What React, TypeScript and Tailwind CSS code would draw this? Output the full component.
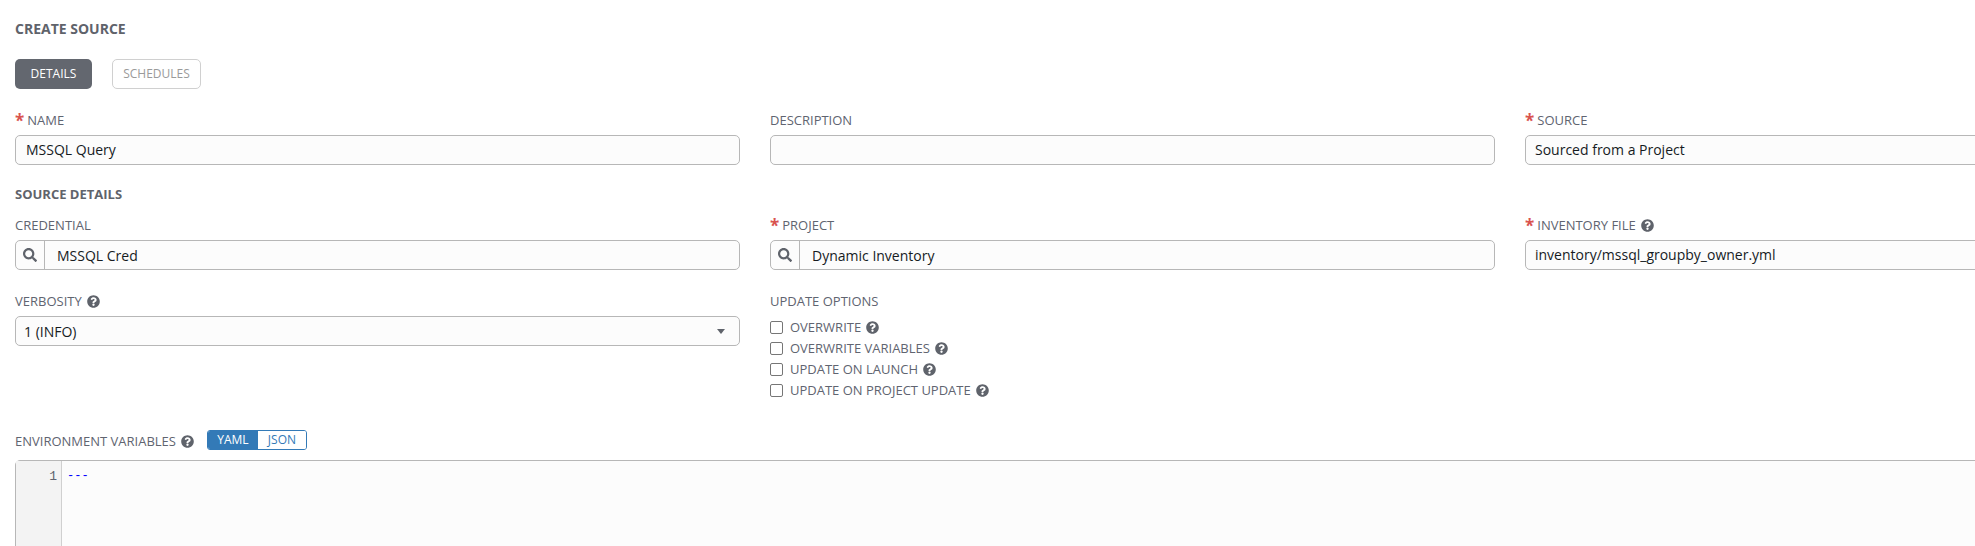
import React from "react";

const Help = () => (
  <svg viewBox="0 0 512 512" className="w-[13px] h-[13px] shrink-0 fill-[#5f636b]">
    <path d="M504 256c0 137-111 248-248 248S8 393 8 256 119 8 256 8s248 111 248 248zM262.700 90c-54.500 0-89.300 23-116.500 63.800-3.500 5.300-2.400 12.400 2.700 16.300l34.700 26.300c5.200 3.900 12.600 3 16.700-2.100 17.900-22.700 30.100-35.800 57.300-35.800 20.400 0 45.700 13.100 45.700 32.900 0 15-12.400 22.700-32.500 34-23.500 13.200-54.600 29.600-54.600 70.600V300c0 6.600 5.400 12 12 12h56c6.600 0 12-5.400 12-12v-1.300c0-28.400 83-29.600 83-106.700 0-58-60.200-102-116.500-102zM256 338c-25.400 0-46 20.600-46 46 0 25.400 20.600 46 46 46s46-20.600 46-46c0-25.400-20.600-46-46-46z" />
  </svg>
);

const Search = () => (
  <svg viewBox="0 0 512 512" className="w-[14px] h-[14px] fill-[#5f636b]">
    <path d="M505 442.700L405.300 343c-4.500-4.500-10.600-7-17-7H372c27.600-35.300 44-79.700 44-128C416 93.100 322.900 0 208 0S0 93.100 0 208s93.100 208 208 208c48.300 0 92.700-16.400 128-44v16.300c0 6.400 2.500 12.500 7 17l99.700 99.700c9.400 9.400 24.600 9.400 33.900 0l28.300-28.300c9.400-9.400 9.400-24.600.1-34zM208 336c-70.700 0-128-57.200-128-128 0-70.700 57.200-128 128-128 70.700 0 128 57.200 128 128 0 70.700-57.200 128-128 128z" />
  </svg>
);

const Label = ({ text, req, help }: { text: string; req?: boolean; help?: boolean }) => (
  <div className="h-[15px] flex items-center text-[13px] leading-[15px] text-[#606470]">
    {req && <span className="text-[#d9534f] text-[17px] leading-[15px] h-[15px] font-bold mr-[3px]">*</span>}
    <span>{text}</span>
    {help && <span className="ml-[5px]"><Help /></span>}
  </div>
);

const Input = ({ value, pad = "pl-[10px]" }: { value?: string; pad?: string }) => (
  <div className={`mt-[7px] h-[30px] border border-[#b7b7b7] rounded-[5px] bg-[#fcfcfc] flex items-center pb-[1px] text-[14px] text-[#161b1f] ${pad}`}>
    {value}
  </div>
);

const Lookup = ({ value }: { value: string }) => (
  <div className="mt-[7px] h-[30px] border border-[#b7b7b7] rounded-[5px] bg-[#fcfcfc] flex items-center text-[14px] text-[#161b1f]">
    <div className="w-[29px] h-full flex items-center justify-center border-r border-[#b7b7b7]">
      <Search />
    </div>
    <span className="pl-[12px] pt-[1px]">{value}</span>
  </div>
);

const Check = ({ text }: { text: string }) => (
  <div className="h-[21px] flex items-center text-[13px] text-[#606470]">
    <span className="w-[13px] h-[13px] border border-[#767676] rounded-[2px] bg-white mr-[7px]" />
    <span className="mr-[5px]">{text}</span>
    <Help />
  </div>
);

export default function App() {
  return (
    <div className="w-[1975px] h-[546px] overflow-hidden bg-white font-['Open_Sans',sans-serif]">
      <div className="w-[2265px] pl-[15px] pt-[19px]">
        <div className="h-[18px] flex items-center text-[14px] font-bold text-[#5f636b]">CREATE SOURCE</div>
        <div className="mt-[22px] flex gap-[20px] text-[12px]">
          <div className="w-[77px] h-[30px] rounded-[5px] bg-[#63676f] text-white flex items-center justify-center">DETAILS</div>
          <div className="w-[89px] h-[30px] rounded-[5px] border border-[#d0d0d0] text-[#9a9a9a] flex items-center justify-center">SCHEDULES</div>
        </div>

        <div className="mt-[24px] grid grid-cols-[725px_725px_725px] gap-x-[30px]">
          <div>
            <Label text="NAME" req />
            <Input value="MSSQL Query" />
          </div>
          <div>
            <Label text="DESCRIPTION" />
            <Input />
          </div>
          <div>
            <Label text="SOURCE" req />
            <Input value="Sourced from a Project" pad="pl-[9px]" />
          </div>
        </div>

        <div className="mt-[21px] h-[18px] flex items-center text-[13px] font-bold text-[#5f636b]">SOURCE DETAILS</div>

        <div className="mt-[14px] grid grid-cols-[725px_725px_725px] gap-x-[30px]">
          <div>
            <Label text="CREDENTIAL" />
            <Lookup value="MSSQL Cred" />
          </div>
          <div>
            <Label text="PROJECT" req />
            <Lookup value="Dynamic Inventory" />
          </div>
          <div>
            <Label text="INVENTORY FILE" req help />
            <Input value="inventory/mssql_groupby_owner.yml" pad="pl-[9px]" />
          </div>
        </div>

        <div className="mt-[24px] grid grid-cols-[725px_725px_725px] gap-x-[30px]">
          <div>
            <Label text="VERBOSITY" help />
            <div className="mt-[7px] h-[30px] border border-[#b7b7b7] rounded-[5px] bg-[#fcfcfc] flex items-center justify-between text-[14px] text-[#161b1f] pl-[8px] pr-[14px]">
              <span>1 (INFO)</span>
              <span className="w-0 h-0 border-x-[4px] border-x-transparent border-t-[5px] border-t-[#5f636b]" />
            </div>
          </div>
          <div>
            <Label text="UPDATE OPTIONS" />
            <div className="mt-[8px]">
              <Check text="OVERWRITE" />
              <Check text="OVERWRITE VARIABLES" />
              <Check text="UPDATE ON LAUNCH" />
              <Check text="UPDATE ON PROJECT UPDATE" />
            </div>
          </div>
        </div>

        <div className="mt-[29px] h-[20px] flex items-center">
          <div className="pt-[2px]">
            <Label text="ENVIRONMENT VARIABLES" help />
          </div>
          <div className="ml-[13px] h-[20px] w-[100px] flex rounded-[3px] border border-[#337ab7] text-[12px] overflow-hidden">
            <div className="w-[50px] bg-[#337ab7] text-white flex items-center justify-center">YAML</div>
            <div className="flex-1 text-[#337ab7] bg-white flex items-center justify-center">JSON</div>
          </div>
        </div>

        <div className="mt-[10px] h-[200px] border border-[#b7b7b7] rounded-t-[5px] bg-[#fcfcfc] flex">
          <div className="w-[46px] bg-[#f3f3f3] border-r border-[#d0d0d0] text-right pr-[4px] pt-[8px] text-[13px] leading-[16px] text-[#606470] font-['Liberation_Mono',monospace]">1</div>
          <div className="pl-[5px] pt-[7px] text-[12px] leading-[16px] text-[#0000ff] font-['Liberation_Mono',monospace]">---</div>
        </div>
      </div>
    </div>
  );
}
